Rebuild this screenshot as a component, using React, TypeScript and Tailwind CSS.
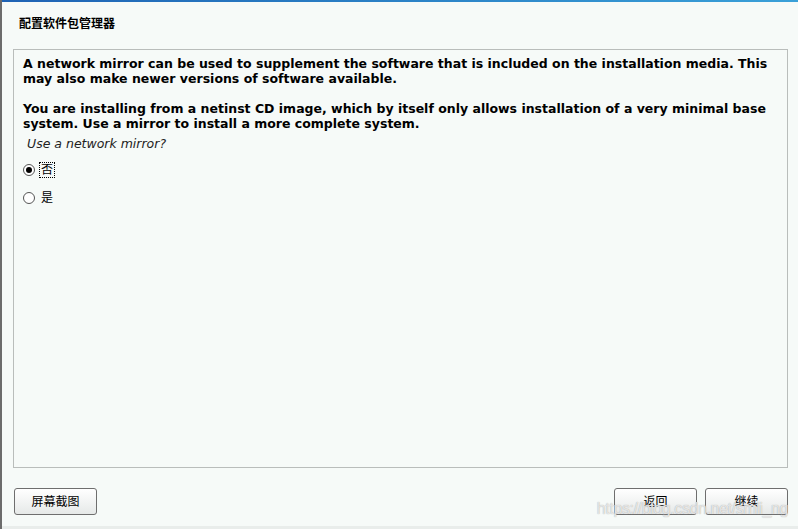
export default function App() {
  return (
    <div
      className="relative w-[798px] h-[529px] overflow-hidden bg-[#f6faf8] text-black flex flex-col"
      style={{ fontFamily: '"DejaVu Sans", "Noto Sans CJK SC", sans-serif' }}
    >
      {/* window chrome */}
      <div className="h-[2px] bg-gradient-to-r from-[#1f63b4] to-[#3aa0d8] shrink-0" />
      <div className="absolute left-0 top-0 bottom-0 w-[2px] bg-[#6c6c6c]" />

      <div className="flex-1 flex flex-col pl-[13px] pr-[10px]">
        <div className="h-[47px] flex items-center pl-[6px] pb-[4px] text-[12px] font-bold">配置软件包管理器</div>

        <div className="h-[419px] border border-[#b9bdbb] pl-[9px] pr-[6px] pt-[6px]">
          <p className="text-[12.5px] font-bold leading-[15px]">
            A network mirror can be used to supplement the software that is included on the installation media. This
            may also make newer versions of software available.
          </p>
          <p className="text-[12.5px] font-bold leading-[15px] mt-[15px]">
            You are installing from a netinst CD image, which by itself only allows installation of a very minimal base
            system. Use a mirror to install a more complete system.
          </p>
          <p className="text-[12.5px] italic leading-[15px] mt-[5px] pl-[4px] text-[#222]">Use a network mirror?</p>

          <div className="mt-[11px] flex flex-col gap-[12px]">
            <label className="flex items-center gap-[5px] h-[16px]">
              <span className="w-[12px] h-[12px] rounded-full border border-[#555] bg-white flex items-center justify-center">
                <span className="w-[6px] h-[6px] rounded-full bg-black" />
              </span>
              <span className="text-[12px] leading-[14px] px-[1px] outline-1 outline-dotted outline-black">否</span>
            </label>
            <label className="flex items-center gap-[5px] h-[16px]">
              <span className="w-[12px] h-[12px] rounded-full border border-[#555] bg-white" />
              <span className="text-[12px] leading-[14px] px-[1px]">是</span>
            </label>
          </div>
        </div>

        <div className="flex items-center justify-between pt-[20px] pl-[1px]">
          <button className="w-[83px] h-[27px] rounded-[3px] border border-[#6e6e6e] bg-gradient-to-b from-white to-[#e6e9e8] text-[12px]">
            屏幕截图
          </button>
          <div className="flex gap-[8px]">
            <button className="w-[83px] h-[27px] rounded-[3px] border border-[#6e6e6e] bg-gradient-to-b from-white to-[#e6e9e8] text-[12px]">
              返回
            </button>
            <button className="w-[83px] h-[27px] rounded-[3px] border border-[#6e6e6e] bg-gradient-to-b from-white to-[#e6e9e8] text-[12px]">
              继续
            </button>
          </div>
        </div>
      </div>

      <div className="h-[3px] bg-[#e9edeb] shrink-0" />

      {/* watermark */}
      <div
        className="absolute right-[10px] bottom-[8px] text-[16px] text-[#ffffff]/70 tracking-tight pointer-events-none"
        style={{ fontFamily: '"Liberation Sans", sans-serif', textShadow: "0 0 1px #9a9a9a" }}
      >
        https://blog.csdn.net/smli_ng
      </div>
    </div>
  );
}
